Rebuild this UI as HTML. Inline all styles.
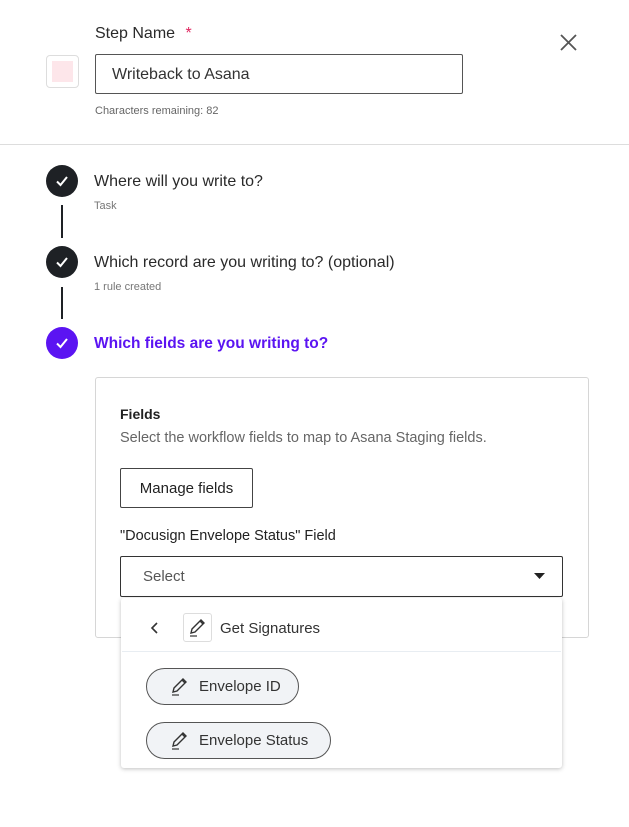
<!DOCTYPE html>
<html><head><style>
*{box-sizing:border-box;margin:0;padding:0}
body{width:629px;height:827px;background:#fff;font-family:"Liberation Sans",sans-serif;color:#222;position:relative;overflow:hidden}
.a{position:absolute}
.circ{position:absolute;left:46px;width:32px;height:32px;border-radius:50%;background:#1e2125;display:flex;align-items:center;justify-content:center}
.vl{position:absolute;left:61px;width:2px;background:#1e2125}
.t{font-size:16px;color:#2a2a2a}
.s{font-size:11px;color:#777}
.chip{position:absolute;left:146px;height:37px;border:1px solid #555;border-radius:19px;background:#f1f3f6;font-size:15px;color:#333;display:flex;align-items:center;padding-left:22px}
</style></head><body>
<div class="a" style="left:95px;top:25px;font-size:16px;color:#2a2a2a">Step Name <span style="color:#e0245e;margin-left:6px">*</span></div>
<div class="a" style="left:46px;top:55px;width:33px;height:33px;border:1px solid #ddd;border-radius:4px;background:#fff"><div style="margin:5px;width:21px;height:21px;background:#fde6ea"></div></div>
<div class="a" style="left:95px;top:54px;width:368px;height:40px;border:1px solid #555;border-radius:2px;padding:11px 16px;font-size:16px;color:#333">Writeback to Asana</div>
<div class="a" style="left:95px;top:105px;font-size:11px;color:#666">Characters remaining: 82</div>
<svg class="a" style="left:559px;top:33px" width="19" height="19" viewBox="0 0 19 19"><path d="M2 2L17 17M17 2L2 17" stroke="#555" stroke-width="1.8"/></svg>
<div class="a" style="left:0;top:144px;width:629px;height:1px;background:#ddd"></div>

<div class="circ" style="top:165px"><svg width="16" height="16" viewBox="0 0 16 16"><path d="M3 8.5L6.5 12L13 4" fill="none" stroke="#fff" stroke-width="2"/></svg></div>
<div class="vl" style="top:205px;height:33px"></div>
<div class="a t" style="left:94px;top:173px">Where will you write to?</div>
<div class="a s" style="left:94px;top:200px">Task</div>
<div class="circ" style="top:246px"><svg width="16" height="16" viewBox="0 0 16 16"><path d="M3 8.5L6.5 12L13 4" fill="none" stroke="#fff" stroke-width="2"/></svg></div>
<div class="vl" style="top:287px;height:32px"></div>
<div class="a t" style="left:94px;top:254px">Which record are you writing to? (optional)</div>
<div class="a s" style="left:94px;top:281px">1 rule created</div>
<div class="circ" style="top:327px;background:#5b14f2"><svg width="16" height="16" viewBox="0 0 16 16"><path d="M3 8.5L6.5 12L13 4" fill="none" stroke="#fff" stroke-width="2"/></svg></div>
<div class="a t" style="left:94px;top:335px;color:#5b14f2;font-weight:bold;font-size:15.5px">Which fields are you writing to?</div>

<div class="a" style="left:95px;top:377px;width:494px;height:261px;border:1.5px solid #d6d6d6;border-radius:3px"></div>
<div class="a" style="left:120px;top:406px;font-size:14px;font-weight:bold;color:#222">Fields</div>
<div class="a" style="left:120px;top:430px;font-size:14.5px;color:#666">Select the workflow fields to map to Asana Staging fields.</div>
<div class="a" style="left:120px;top:468px;width:133px;height:40px;border:1px solid #444;border-radius:2px;font-size:15px;display:flex;align-items:center;justify-content:center;color:#222">Manage fields</div>
<div class="a" style="left:120px;top:528px;font-size:14.5px;color:#222">"Docusign Envelope Status" Field</div>
<div class="a" style="left:120px;top:556px;width:443px;height:41px;border:1px solid #333;border-radius:2px;font-size:15px;color:#555;padding:11px 22px">Select</div>
<svg class="a" style="left:534px;top:573px" width="11" height="6"><path d="M0 0H11L5.5 6Z" fill="#222"/></svg>

<div class="a" style="left:121px;top:598px;width:441px;height:170px;background:#fff;border-radius:3px;box-shadow:0 1px 4px rgba(0,0,0,.25)"></div>
<svg class="a" style="left:150px;top:622px" width="10" height="12"><path d="M7 1L2 6L7 11" fill="none" stroke="#333" stroke-width="1.6"/></svg>
<div class="a" style="left:183px;top:613px;width:29px;height:29px;border:1px solid #ddd;border-radius:3px"></div>
<svg class="a" style="left:187px;top:617px" width="21" height="21" viewBox="0 0 21 21"><path d="M4 16L5 12L14 3L17 6L8 15Z M13 4L16 7" fill="none" stroke="#333" stroke-width="1.4"/><path d="M3 19H10" stroke="#333" stroke-width="1.2"/></svg>
<div class="a" style="left:220px;top:620px;font-size:15px;color:#333">Get Signatures</div>
<div class="a" style="left:122px;top:651px;width:439px;height:1px;background:#e8edf2"></div>
<div class="chip" style="top:668px;width:153px"><svg width="21" height="21" viewBox="0 0 21 21" style="margin-right:9px"><path d="M4 16L5 12L14 3L17 6L8 15Z M13 4L16 7" fill="none" stroke="#333" stroke-width="1.4"/><path d="M3 19H10" stroke="#333" stroke-width="1.2"/></svg>Envelope ID</div>
<div class="chip" style="top:722px;width:185px"><svg width="21" height="21" viewBox="0 0 21 21" style="margin-right:9px"><path d="M4 16L5 12L14 3L17 6L8 15Z M13 4L16 7" fill="none" stroke="#333" stroke-width="1.4"/><path d="M3 19H10" stroke="#333" stroke-width="1.2"/></svg>Envelope Status</div>
</body></html>
